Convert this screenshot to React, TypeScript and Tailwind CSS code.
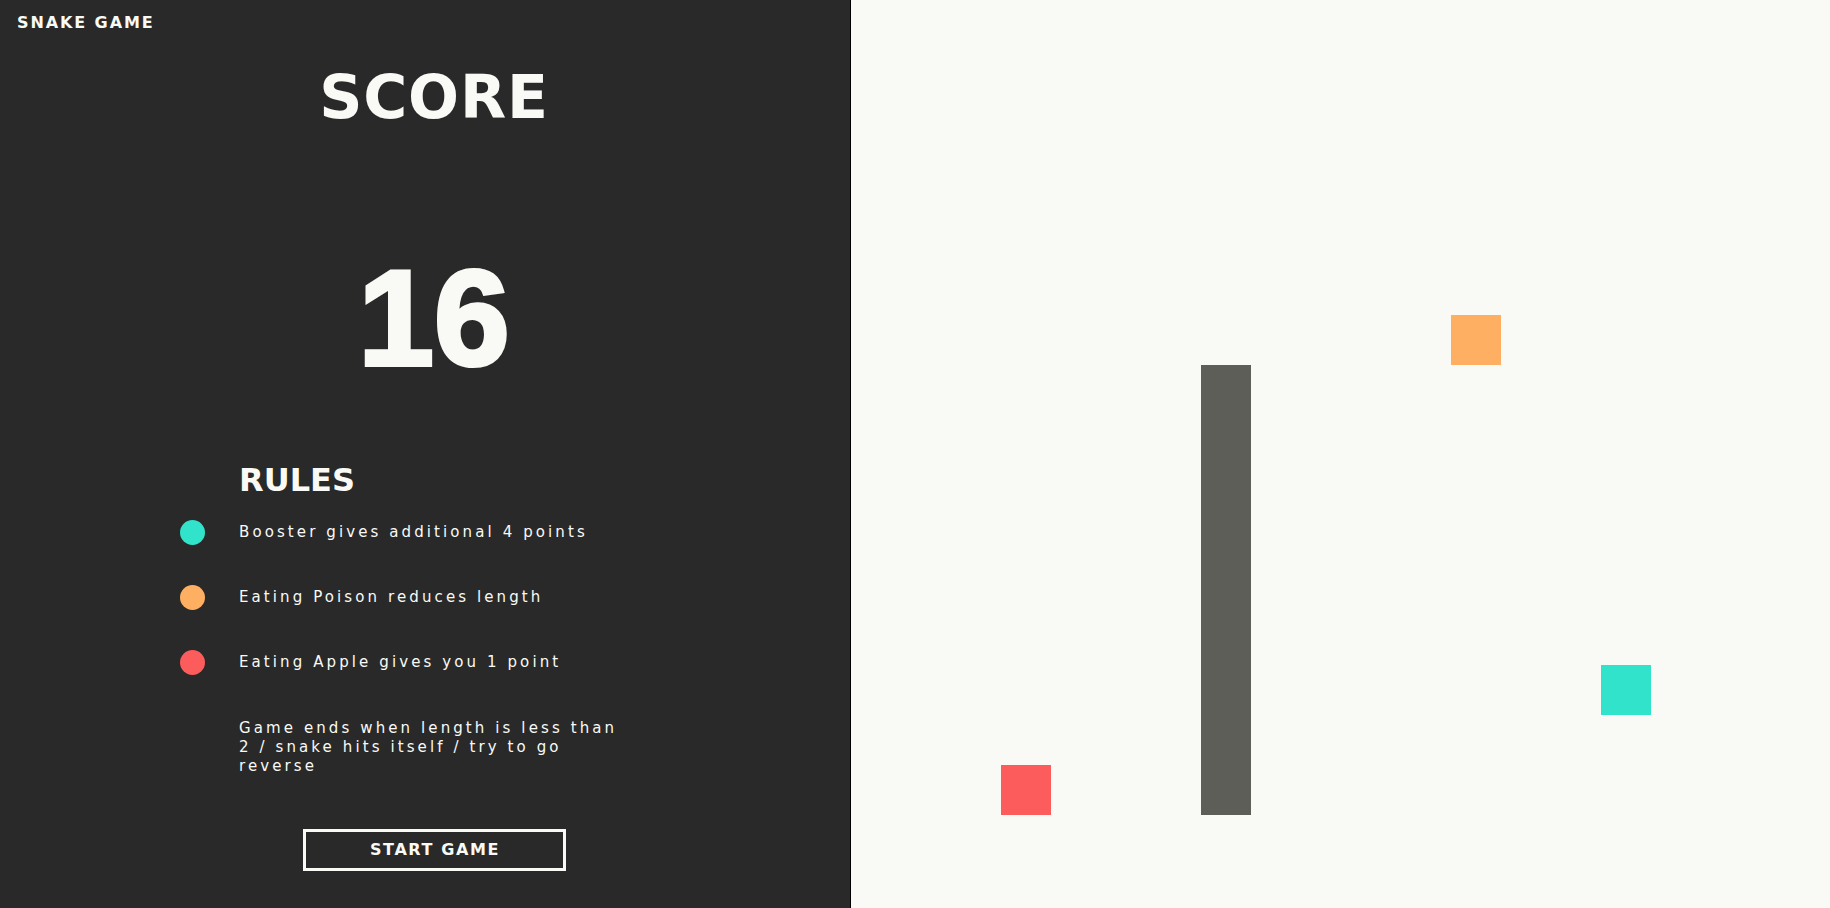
import React from "react";

const rules = [
  { color: "bg-[#32e3cc]", text: "Booster gives additional 4 points" },
  { color: "bg-[#ffaf62]", text: "Eating Poison reduces length" },
  { color: "bg-[#fd5c5c]", text: "Eating Apple gives you 1 point" },
];

function ScorePanel() {
  return (
    <div className="w-[851px] h-full shrink-0 bg-[#292929] border-r border-black text-[#f9faf6] font-['DejaVu_Sans',sans-serif] flex flex-col">
      <div className="pl-[17px] pt-[15px] text-[16px] leading-none font-bold tracking-[1.9px]">SNAKE GAME</div>

      <div className="pl-[18px] flex flex-col items-center">
        <h1 className="mt-[36px] text-[60px] leading-none font-bold tracking-[0.8px]">SCORE</h1>
        <div className="mt-[123px] text-[136px] leading-none font-bold font-['Liberation_Sans',sans-serif] [-webkit-text-stroke:4px_#f9faf6]">16</div>
      </div>

      <div className="pl-[180px]">
        <h2 className="mt-[78px] ml-[59px] text-[32px] leading-none font-bold">RULES</h2>
        <ul className="mt-[24px] flex flex-col gap-[40px]">
          {rules.map((r) => (
            <li key={r.text} className="h-[25px] flex items-center gap-[34px]">
              <span className={`w-[25px] h-[25px] rounded-full ${r.color}`}></span>
              <span className="text-[15px] tracking-[3.1px]">{r.text}</span>
            </li>
          ))}
        </ul>
        <p className="mt-[44px] ml-[59px] w-[392px] text-[15px] leading-[19px] tracking-[3.1px]">
          Game ends when length is less than 2 / snake hits itself / try to go reverse
        </p>
      </div>

      <div className="pl-[18px] flex justify-center">
        <button className="mt-[53px] w-[263px] h-[42px] border-[3px] border-[#f9faf6] text-[16px] font-bold tracking-[1.6px] pl-[2px]">
          START GAME
        </button>
      </div>
    </div>
  );
}

function Board() {
  return (
    <div className="relative flex-1 h-full bg-[#f9faf6] overflow-hidden">
      <div className="absolute left-[150px] top-[765px] w-[50px] h-[50px] bg-[#fd5c5c]"></div>
      <div className="absolute left-[350px] top-[365px] w-[50px] h-[450px] bg-[#5d5e58]"></div>
      <div className="absolute left-[600px] top-[315px] w-[50px] h-[50px] bg-[#ffaf62]"></div>
      <div className="absolute left-[750px] top-[665px] w-[50px] h-[50px] bg-[#32e3cc]"></div>
    </div>
  );
}

export default function App() {
  return (
    <div className="w-full h-screen flex overflow-hidden">
      <ScorePanel />
      <Board />
    </div>
  );
}
